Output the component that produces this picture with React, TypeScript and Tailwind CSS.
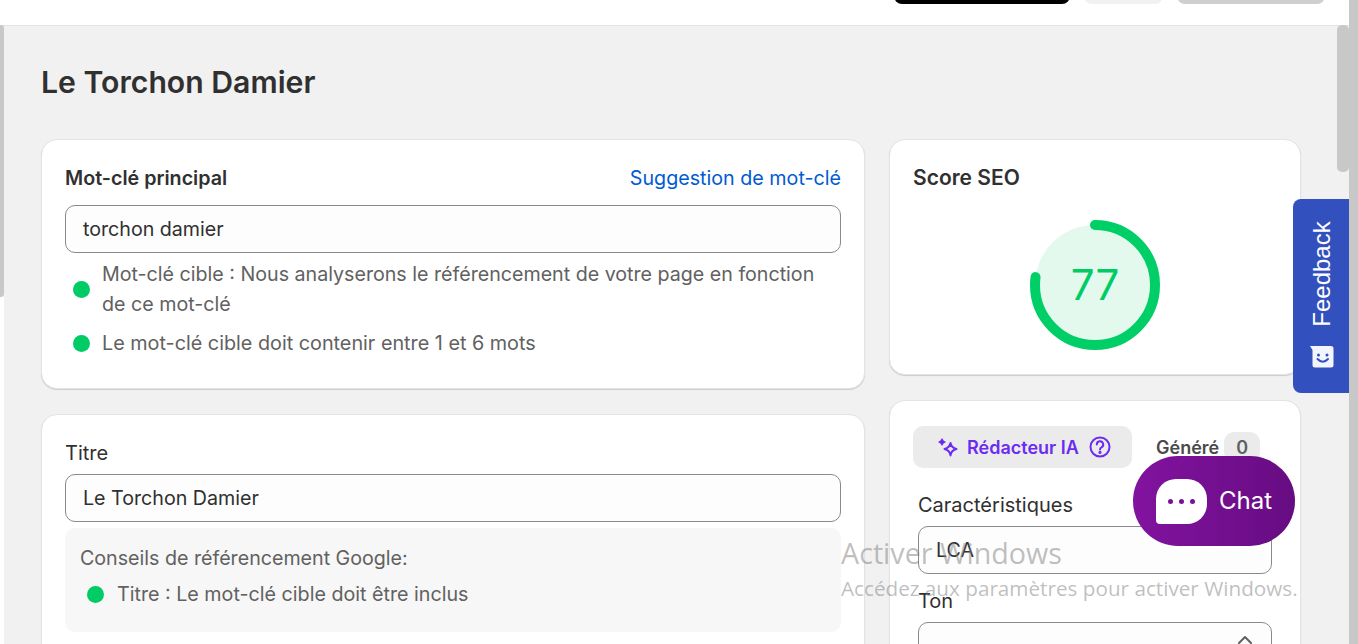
import React from 'react'
import { ChevronUp } from 'lucide-react'

function Dot() {
  return <span className="w-[17px] h-[17px] rounded-full bg-[#00cc66] shrink-0" />
}

function Hint({ children, className = 'pl-[8px] gap-[12px] text-[19.65px]' }: { children: React.ReactNode; className?: string }) {
  return (
    <div className={`flex items-center leading-[30px] text-[#616161] ${className}`}>
      <Dot />
      <span>{children}</span>
    </div>
  )
}

function Field({ value }: { value: string }) {
  return (
    <div className="h-[48px] rounded-[10px] border border-[#8a8a8a] bg-[#fdfdfd] px-[17px] pt-[2px] flex items-center text-[19.65px] text-[#303030]">
      {value}
    </div>
  )
}

function Card({ className, children }: { className?: string; children: React.ReactNode }) {
  return (
    <div className={`bg-white rounded-[16px] border border-[#e3e3e3] shadow-[0_1px_1px_rgba(0,0,0,0.15)] ${className ?? ''}`}>
      {children}
    </div>
  )
}

function ScoreRing({ score }: { score: number }) {
  const r = 60
  const c = 2 * Math.PI * r
  return (
    <div className="relative w-[132px] h-[132px]">
      <svg width="132" height="132" viewBox="0 0 132 132" className="-rotate-90">
        <circle cx="66" cy="66" r={r} fill="#e3f9ee" stroke="none" />
        <circle cx="66" cy="66" r={r} fill="none" stroke="#00cf68" strokeWidth="10" strokeLinecap="round" strokeDasharray={`${(c * score) / 100} ${c}`} />
      </svg>
      <div className="absolute inset-0 pb-[2px] flex items-center justify-center text-[42px] text-[#00cc66]">{score}</div>
    </div>
  )
}

export default function App() {
  return (
    <div className="relative flex h-[644px] w-[1358px] overflow-hidden bg-white font-['Inter',sans-serif] text-[#303030]">
      <div className="flex-1 flex flex-col min-w-0">
        <div className="h-[26px] shrink-0 bg-white border-b border-[#e3e3e3] flex justify-end items-start pr-[24px] gap-[14px] overflow-hidden">
          <div className="w-[176px] h-[10px] -mt-[6px] bg-black rounded-b-[8px]" />
          <div className="w-[79px] h-[10px] -mt-[6px] bg-[#f1f1f1] rounded-b-[8px]" />
          <div className="w-[148px] h-[10px] -mt-[6px] bg-[#cfcfcf] rounded-b-[8px]" />
        </div>
        <div className="flex-1 ml-[4px] bg-[#f1f1f1] pl-[37px] pr-[48px] overflow-hidden">
          <h1 className="mt-[36px] h-[40px] leading-[40px] text-[30.2px] font-semibold">Le Torchon Damier</h1>
          <div className="mt-[37px] flex gap-[24px]">
            <div className="w-[824px] flex flex-col gap-[25px]">
              <Card className="h-[250px] px-[23px] pt-[24px]">
                <div className="flex justify-between items-center h-[28px] pt-[1px]">
                  <span className="text-[19.7px] font-semibold">Mot-clé principal</span>
                  <span className="text-[19.7px] text-[#005bd3]">Suggestion de mot-clé</span>
                </div>
                <div className="mt-[13px]">
                  <Field value="torchon damier" />
                </div>
                <div className="mt-[6px]">
                  <Hint>Mot-clé cible : Nous analyserons le référencement de votre page en fonction de ce mot-clé</Hint>
                </div>
                <div className="mt-[9px]">
                  <Hint className="pl-[8px] gap-[12px] text-[19.8px]">Le mot-clé cible doit contenir entre 1 et 6 mots</Hint>
                </div>
              </Card>
              <Card className="h-[300px] px-[23px] pt-[24px]">
                <div className="text-[20px] leading-[28px]">Titre</div>
                <div className="mt-[7px]">
                  <Field value="Le Torchon Damier" />
                </div>
                <div className="mt-[6px] h-[104px] rounded-[10px] bg-[#f7f7f7] px-[15px] pt-[15px] text-[#616161]">
                  <div className="text-[19.65px] leading-[30px]">Conseils de référencement Google:</div>
                  <div className="mt-[6px]">
                    <Hint className="pl-[7px] gap-[13px] text-[19.7px]">Titre : Le mot-clé cible doit être inclus</Hint>
                  </div>
                </div>
              </Card>
            </div>
            <div className="w-[412px] flex flex-col gap-[25px]">
              <Card className="h-[236px] px-[23px] pt-[24px]">
                <div className="h-[28px] leading-[28px] text-[21px] font-semibold">Score SEO</div>
                <div className="mt-[27px] flex justify-center">
                  <ScoreRing score={77} />
                </div>
              </Card>
              <Card className="h-[300px] px-[23px] pt-[25px]">
                <div className="flex items-center">
                  <div className="w-[219px] h-[42px] rounded-[10px] bg-[#ebebeb] flex items-center pl-[24px] text-[18px] font-semibold text-[#6c2bf2]">
                    <svg width="22" height="22" viewBox="0 0 22 22" fill="none" stroke="currentColor" strokeWidth="2" strokeLinejoin="round">
                      <path d="M13.5 7 C14 10.5 15.5 12 19.5 13 C15.5 14 14 15.5 13.5 19.5 C13 15.5 11.5 14 7.5 13 C11.5 12 13 10.5 13.5 7 Z" />
                      <path d="M5 2 L6.6 4.4 L9 6 L6.6 7.6 L5 10 L3.4 7.6 L1 6 L3.4 4.4 Z" fill="currentColor" stroke="none" />
                    </svg>
                    <span className="ml-[8px]">Rédacteur IA</span>
                    <svg width="24" height="24" viewBox="0 0 24 24" fill="none" stroke="currentColor" strokeWidth="2" strokeLinecap="round" className="ml-[9px]">
                      <circle cx="12" cy="12" r="9.5" />
                      <path d="M8.8 9.4a3.2 3.2 0 1 1 4.7 2.9c-1 .5-1.5 1.1-1.5 2.2" />
                      <circle cx="12" cy="17.4" r="0.6" fill="currentColor" />
                    </svg>
                  </div>
                  <span className="ml-[24px] text-[18px] font-semibold text-[#4a4a4a]">Généré</span>
                  <span className="ml-[5px] w-[36px] h-[30px] rounded-[10px] bg-[#ebebeb] flex items-center justify-center text-[18px] font-semibold text-[#616161]">0</span>
                </div>
                <div className="px-[5px]">
                  <div className="mt-[23px] text-[20px] leading-[28px]">Caractéristiques</div>
                  <div className="mt-[7px]">
                    <Field value="LCA" />
                  </div>
                  <div className="mt-[13px] text-[20px] leading-[28px]">Ton</div>
                  <div className="mt-[7px] h-[48px] rounded-[10px] border border-[#8a8a8a] bg-[#fdfdfd] flex justify-end pr-[14px] pt-[5px]">
                    <ChevronUp size={24} strokeWidth={2} className="text-[#616161]" />
                  </div>
                </div>
              </Card>
            </div>
          </div>
        </div>
      </div>
      <div className="w-[9px] shrink-0 bg-[#c8c8c8]" />

      {/* scrollbar thumbs */}
      <div className="absolute left-0 top-[25px] w-[4px] h-[272px] bg-[#c8c8c8] rounded-r-[3px]" />
      <div className="absolute left-[1337px] top-[25px] w-[12px] h-[147px] bg-[#c8c8c8] rounded-[5px]" />

      {/* feedback tab */}
      <div className="absolute left-[1293px] top-[199px] w-[56px] h-[194px] bg-[#3350bf] rounded-l-[8px] flex flex-col items-center text-white">
        <div className="mt-[23px] h-[104px] flex items-center justify-center">
          <span className="-rotate-90 font-['Liberation_Sans',sans-serif] text-[24px] leading-none ml-[2px]">Feedback</span>
        </div>
        <svg width="24" height="22" viewBox="0 0 24 22" className="mt-[20px] ml-[2px]">
          <path d="M0 0 H21 a2.5 2.5 0 0 1 2.5 2.5 V19 a2.5 2.5 0 0 1 -2.5 2.5 H5 a2.5 2.5 0 0 1 -2.5 -2.5 V4 Z" fill="#f3f5fc" />
          <circle cx="8.5" cy="9" r="1.5" fill="#3350bf" />
          <circle cx="17" cy="9" r="1.5" fill="#3350bf" />
          <path d="M7.5 13 Q12.8 18.5 18 13" fill="none" stroke="#3350bf" strokeWidth="2" strokeLinecap="round" />
        </svg>
      </div>

      {/* chat launcher */}
      <div className="absolute left-[1133px] top-[456px] w-[162px] h-[90px] rounded-[45px] bg-gradient-to-r from-[#82139f] to-[#660c82] flex items-center pl-[23px] text-white">
        <div className="w-[51px] h-[45px] bg-white rounded-[20px] rounded-bl-[4px] flex items-center justify-center gap-[6px]">
          <span className="w-[5px] h-[5px] rounded-full bg-[#7a109a]" />
          <span className="w-[5px] h-[5px] rounded-full bg-[#7a109a]" />
          <span className="w-[5px] h-[5px] rounded-full bg-[#7a109a]" />
        </div>
        <span className="ml-[12px] text-[24px]">Chat</span>
      </div>

      {/* windows watermark */}
      <div className="absolute left-[841px] top-[533px] font-['Open_Sans',sans-serif] text-[#808080]/50 pointer-events-none">
        <div className="text-[28.7px] leading-[40px]">Activer Windows</div>
        <div className="text-[20.7px] leading-[30px] whitespace-nowrap">Accédez aux paramètres pour activer Windows.</div>
      </div>
    </div>
  )
}
